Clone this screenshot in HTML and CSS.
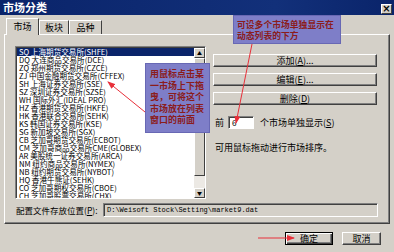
FILE: index.html
```html
<!DOCTYPE html>
<html lang="zh-CN">
<head>
<meta charset="UTF-8">
<title>市场分类</title>
<link rel="stylesheet" href="styles.css">
</head>
<body>
<div class="dlg">
    <div class="titlebar">
        <span class="title">市场分类</span>
        <span class="close">×</span>
    </div>

    <div class="tabs">
        <div class="tab active">市场</div>
        <div class="tab">板块</div>
        <div class="tab">品种</div>
    </div>

    <div class="panel">
        <div class="top">
            <div class="list">
                <div class="items">
                    <div class="row sel">SQ 上海期货交易所(SHFE)</div>
                    <div class="row">DQ 大连商品交易所(DCE)</div>
                    <div class="row">ZQ 郑州期货交易所(CZCE)</div>
                    <div class="row">ZJ 中国金融期货交易所(CFFEX)</div>
                    <div class="row">SH 上海证券交易所(SSE)</div>
                    <div class="row">SZ 深圳证券交易所(SZSE)</div>
                    <div class="row">WH 国际外汇(IDEAL PRO)</div>
                    <div class="row">HZ 香港期货交易所(HKFE)</div>
                    <div class="row">HK 香港联合交易所(SEHK)</div>
                    <div class="row">KS 韩国证券交易所(KSE)</div>
                    <div class="row">SG 新加坡交易所(SGX)</div>
                    <div class="row">CB 芝加哥期货交易所(ECBOT)</div>
                    <div class="row">CM 芝加哥商品交易所CME(GLOBEX)</div>
                    <div class="row">AR 美股统一证券交易所(ARCA)</div>
                    <div class="row">NM 纽约商品交易所(NYMEX)</div>
                    <div class="row">NB 纽约期货交易所(NYBOT)</div>
                    <div class="row">HQ 香港牛熊证(SEHK)</div>
                    <div class="row">CO 芝加哥期权交易所(CBOE)</div>
                    <div class="row">CH 芝加哥股票交易所(CHX)</div>
                </div>
                <div class="scroll">
                    <div class="sbtn">▲</div>
                    <div class="track"><div class="thumb"></div></div>
                    <div class="sbtn">▼</div>
                </div>
            </div>

            <div class="side">
                <div class="btn wide">添加(<u>A</u>)...</div>
                <div class="btn wide">编辑(<u>E</u>)...</div>
                <div class="btn wide">删除(<u>D</u>)</div>
                <div class="count">
                    <span>前</span>
                    <div class="field num">6</div>
                    <span>个市场单独显示(<u>S</u>)</span>
                </div>
                <div class="hint">可用鼠标拖动进行市场排序。</div>
            </div>
        </div>

        <div class="cfg">
            <span class="lbl">配置文件存放位置(<u>P</u>):</span>
            <div class="field path">D:\Weisoft Stock\Setting\market9.dat</div>
        </div>
    </div>

    <div class="foot">
        <div class="btn ok"><span class="focus">确定</span></div>
        <div class="btn cancel">取消</div>
    </div>

    <!-- annotations laid over the dialog -->
    <div class="note note-top">可设多个市场单独显示在<br>动态列表的下方</div>
    <div class="note note-mid">用鼠标点击某<br>一市场上下拖<br>曳，可将这个<br>市场放在列表<br>窗口的前面</div>

    <svg class="arrows" width="394" height="252" viewBox="0 0 394 252">
        <defs>
            <marker id="head" markerWidth="8" markerHeight="6" refX="7" refY="3" orient="auto" markerUnits="userSpaceOnUse">
                <path d="M0,0 L8,3 L0,6 Z" fill="#e8303a"/>
            </marker>
        </defs>
        <line x1="252" y1="44" x2="236" y2="123" stroke="#e8303a" stroke-width="1" marker-end="url(#head)"/>
        <line x1="145" y1="112" x2="108" y2="82" stroke="#e8303a" stroke-width="1" marker-end="url(#head)"/>
        <line x1="258" y1="238" x2="294" y2="238" stroke="#e8303a" stroke-width="1" marker-end="url(#head)"/>
    </svg>
</div>
</body>
</html>
```

FILE: styles.css
```css
* { box-sizing: border-box; }
body { margin: 0; font-family: "Noto Sans CJK SC", "Liberation Sans", sans-serif; font-size: 9px; color: #000; }
u { text-decoration: underline; }

.dlg { position: relative; width: 394px; height: 252px; background: #d4d0c8; overflow: hidden; }

.titlebar { height: 15px; display: flex; align-items: center; justify-content: space-between; padding: 0 2px 0 3px; background: linear-gradient(to right, #0a246a, #12307a 70%, #0a246a); }
.title { color: #fff; font-weight: bold; font-size: 11px; line-height: 15px; }
.close { width: 11px; height: 10px; margin-top: 2px; background: #d4d0c8; border: 1px solid; border-color: #fff #404040 #404040 #fff; font-size: 10px; line-height: 7px; text-align: center; font-weight: bold; font-family: "DejaVu Sans", sans-serif; }

.tabs { display: flex; height: 19px; padding: 3px 0 0 6px; align-items: flex-end; }
.tab { height: 14px; padding: 0 8px; line-height: 13px; border-left: 1px solid #fff; border-right: 1px solid #404040; border-top: 1px solid #fff; }
.tab.active { height: 17px; width: 33px; padding: 0; text-align: center; line-height: 15px; position: relative; z-index: 1; margin-bottom: -1px; background: #d4d0c8; }
.tab:nth-child(2) { width: 30px; padding: 0; text-align: center; }
.tab:nth-child(3) { width: 33px; padding: 0; text-align: center; }

.panel { margin: 0 4px; height: 190px; border: 1px solid; border-color: #fff #404040 #404040 #fff; box-shadow: inset -1px -1px #808080; padding: 11px 0 0 10px; }

.top { display: flex; gap: 7px; }

.list { width: 191px; height: 153px; display: flex; background: #fff; border: 1px solid; border-color: #808080 #fff #fff #808080; box-shadow: inset 1px 1px #404040; padding: 1px 0 0 1px; }
.items { flex: 1; overflow: hidden; }
.row { height: 8px; line-height: 8px; font-size: 7.6px; padding-left: 2px; white-space: nowrap; overflow: visible; }
.row.sel { background: #0a246a; color: #fff; }

.scroll { width: 11px; display: flex; flex-direction: column; }
.sbtn { height: 10px; background: #d4d0c8; border: 1px solid; border-color: #fff #404040 #404040 #fff; font-size: 5px; line-height: 8px; text-align: center; }
.track { flex: 1; background: #ece9e4; display: flex; flex-direction: column; }
.thumb { height: 118px; background: #d4d0c8; border: 1px solid; border-color: #fff #404040 #404040 #fff; }

.side { width: 164px; padding-top: 8px; }
.btn { background: #d4d0c8; border: 1px solid; border-color: #fff #404040 #404040 #fff; box-shadow: inset -1px -1px #808080; text-align: center; font-size: 9px; }
.btn.wide { height: 13px; line-height: 11px; margin-bottom: 6px; }

.count { display: flex; align-items: center; margin-top: 11px; padding-left: 2px; }
.field { background: #fff; border: 1px solid; border-color: #808080 #fff #fff #808080; box-shadow: inset 1px 1px #404040; }
.num { width: 26px; height: 13px; margin: 0 6px 0 4px; font-size: 8px; line-height: 11px; padding-left: 3px; }
.hint { margin-top: 12px; padding-left: 2px; }

.cfg { display: flex; align-items: center; margin-top: 4px; padding-left: 1px; }
.lbl { width: 87px; font-size: 8.5px; white-space: nowrap; }
.path { width: 275px; height: 14px; background: #d4d0c8; font-family: "Liberation Mono", monospace; font-size: 7px; line-height: 12px; padding-left: 3px; }

.foot { display: flex; justify-content: flex-end; gap: 9px; padding: 8px 13px 0 0; }
.ok { width: 48px; height: 13px; border: 1px solid #000; box-shadow: inset 1px 1px #fff, inset -1px -1px #404040, inset -2px -2px #808080; padding: 2px; line-height: 8px; }
.focus { display: block; height: 8px; }
.cancel { width: 39px; height: 13px; line-height: 11px; }

.note { position: absolute; background: #7e7ec8; border: 1px solid #6868b4; color: #8b1c1c; font-size: 9px; font-weight: bold; white-space: nowrap; }
.note-top { left: 233px; top: 15px; width: 108px; height: 29px; padding: 3px 3px; line-height: 11px; font-size: 8.8px; }
.note-mid { left: 145px; top: 63px; width: 65px; height: 70px; padding: 4px 4px; line-height: 11.5px; }

.arrows { position: absolute; left: 0; top: 0; pointer-events: none; }
```
